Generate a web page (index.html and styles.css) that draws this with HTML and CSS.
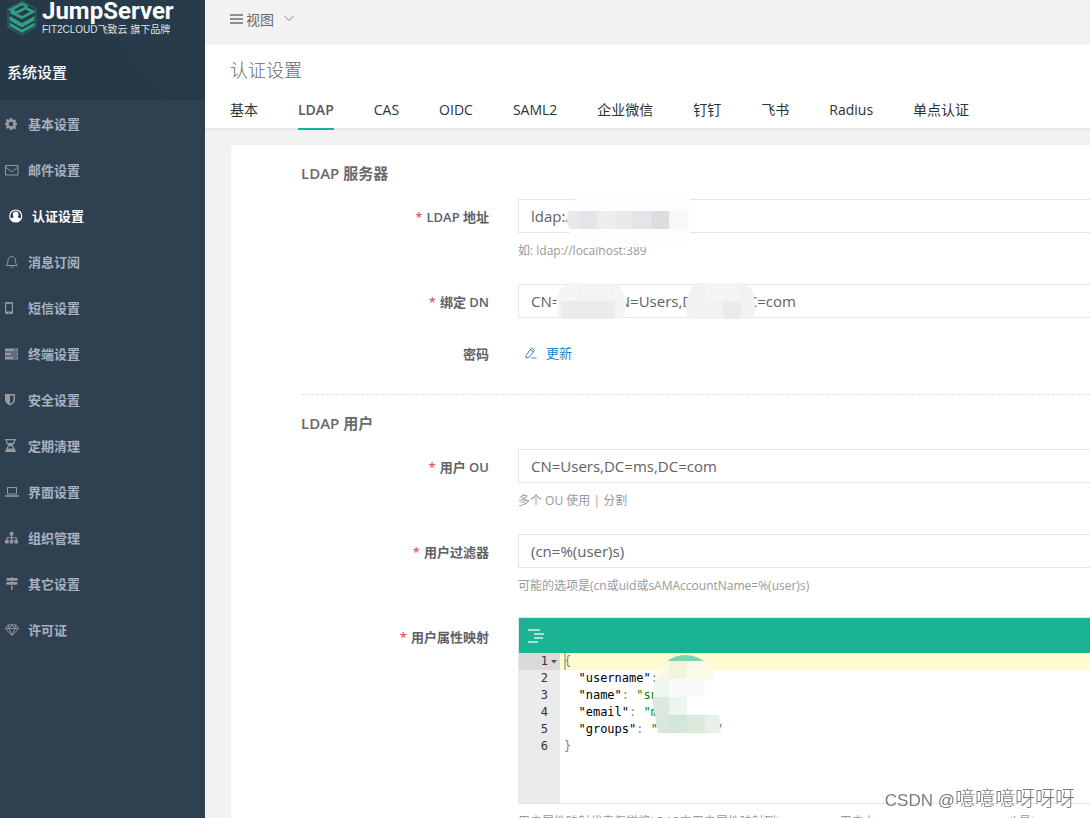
FILE: index.html
```html
<!DOCTYPE html>
<html lang="zh-CN">
<head>
<meta charset="utf-8">
<title>认证设置 - JumpServer</title>
<link rel="stylesheet" href="styles.css">
</head>
<body>
<div class="app">
  <aside class="sidebar">
    <div class="brand">
      <div class="logo">
        <svg class="logo-mark" viewBox="0 0 30 36" aria-hidden="true">
          <path d="M15 1 29 9v18L15 35 1 27V9z" fill="none" stroke="#2a6f6b" stroke-width="1"/>
          <path d="M20.500 6.500 15 3.800 4 9.800 9 12.800 18.500 8 26 11.500 15 17.600 3.500 12" fill="none" stroke="#2f9e83" stroke-width="2.800"/>
          <path d="M2.500 16 15 23 27.500 16V20.500L15 27.500 2.500 20.500zM2.500 22.500 15 29.500 27.500 22.500V26L15 33 2.500 26z" fill="#2f9e83"/>
        </svg>
        <div class="logo-text">
          <span class="logo-name">JumpServer</span>
          <span class="logo-sub">FIT2CLOUD飞致云 旗下品牌</span>
        </div>
      </div>
      <h2 class="section-name">系统设置</h2>
    </div>
    <nav class="menu">
      <a class="menu-item" href="#basic"><svg class="menu-icon" viewBox="0 0 14 14"><path fill-rule="evenodd" d="M5 1h2l.4 1.600 1 .4L9.800 2.200l1.400 1.400-.8 1.400.4 1 1.200.3v1.900l-1.200.4-.4 1 .8 1.400-1.400 1.300-1.400-.8-1 .4L7 13H5l-.4-1.500-1-.4-1.400.8L.8 10.500 1.600 9l-.4-1L0 7.700V5.900l1.200-.3.4-1L.8 3.200 2.200 2l1.400.8 1-.4zM6 4.800a2.200 2.200 0 1 0 0 4.400 2.200 2.200 0 0 0 0-4.400z"/></svg>基本设置</a>
      <a class="menu-item" href="#mail"><svg class="menu-icon line" viewBox="0 0 14 14"><path d="M.5 2.500h12.500v9.500H.5zM.5 4l6.200 4.800L13 4"/></svg>邮件设置</a>
      <a class="menu-item active" href="#auth" aria-current="page"><svg class="menu-icon" viewBox="0 0 14 14"><circle cx="6.700" cy="7" r="6" fill="none" stroke="currentColor" stroke-width="1.200"/><path d="M6.700 2.600c1.800 0 2.800 1.200 2.800 2.900 0 1-.4 1.900-1 2.400.2.500 2.400.6 3.200 2.100a6 6 0 0 1-5 3 6 6 0 0 1-5-3c.8-1.500 3-1.600 3.200-2.100-.6-.5-1-1.400-1-2.400 0-1.700 1-2.900 2.800-2.900z"/></svg>认证设置</a>
      <a class="menu-item" href="#message"><svg class="menu-icon line" viewBox="0 0 14 14"><path d="M6.700.5v1M1.200 10.500C2.600 9 3 7.500 3 5.200 3 3 4.600 1.700 6.700 1.700s3.700 1.300 3.700 3.500c0 2.300.4 3.800 1.800 5.300zM5.300 11.500c.3 1.400 2.500 1.400 2.800 0"/></svg>消息订阅</a>
      <a class="menu-item" href="#sms"><svg class="menu-icon" viewBox="0 0 14 14"><path fill-rule="evenodd" d="M1.300 1h5.400c.8 0 1.300.5 1.300 1.200v9.600c0 .7-.5 1.200-1.300 1.200H1.300C.5 13 0 12.500 0 11.800V2.200C0 1.500.5 1 1.300 1zM1.200 2.800v7.700h5.600V2.800zM4 11.200a.6.6 0 1 0 0 1.200.6.6 0 0 0 0-1.200z"/></svg>短信设置</a>
      <a class="menu-item" href="#terminal"><svg class="menu-icon" viewBox="0 0 14 14"><path fill-rule="evenodd" d="M0 1.500h13v3H0zM9 2.500v1h3v-1zM0 5.500h13v3H0zM6 6.500v1h6v-1zM0 9.500h13v3H0zM8 10.500v1h4v-1z"/></svg>终端设置</a>
      <a class="menu-item" href="#security"><svg class="menu-icon" viewBox="0 0 14 14"><path fill-rule="evenodd" d="M0 1h10v6c0 2.600-2.500 4.200-5 5.500C2.500 11.200 0 9.600 0 7zM5 2.500v8.400c1.700-1 3.500-2.200 3.500-3.900V2.500z"/></svg>安全设置</a>
      <a class="menu-item" href="#clean"><svg class="menu-icon" viewBox="0 0 14 14"><path fill-rule="evenodd" d="M0 0h11v1.300h-.8c0 2.700-1.300 4.300-3 5.200 1.700.9 3 2.500 3 5.200h.8V13H0v-1.300h.8c0-2.700 1.300-4.300 3-5.200-1.700-.9-3-2.500-3-5.200H0zM2 1.300c0 1.200.3 2 .8 2.700h5.400C8.700 3.300 9 2.500 9 1.300zM4.700 7.200C3.600 7.800 2.700 8.500 2.300 9.600h6.400C8.300 8.500 7.400 7.800 6.300 7.200z"/></svg>定期清理</a>
      <a class="menu-item" href="#ui"><svg class="menu-icon" viewBox="0 0 14 14"><path fill-rule="evenodd" d="M2 2h10v7.500H2zM3 3v5.500h8V3zM0 10.300h14v.9c0 .4-.5.600-1 .6H1c-.5 0-1-.2-1-.6z"/></svg>界面设置</a>
      <a class="menu-item" href="#org"><svg class="menu-icon" viewBox="0 0 14 14"><path d="M4.800 1h3.600v3.500H7.200v1.700h4.600V9H13v3.500H9.500V9h1.200V7.200H7.200V9h1.200v3.500H4.800V9H6V7.200H2.500V9h1.200v3.500H0V9h1.400V6.200H6V4.500H4.800z"/></svg>组织管理</a>
      <a class="menu-item" href="#other"><svg class="menu-icon" viewBox="0 0 14 14"><path d="M6 0h1.500v1h4.300L13 2.400l-1.200 1.400H1.500V1H6zM6 4.200h1.500V5h4.800v2.800H2L.6 6.400 2 5h4zM6 8.400h1.500V13H6z"/></svg>其它设置</a>
      <a class="menu-item" href="#license"><svg class="menu-icon line" viewBox="0 0 15 14"><path d="M3.500 1.500h8l3 4-7 7.500-7-7.500zM.5 5.500h14M3.500 1.500l1 4 3 7 3-7 1-4M7.500 1.500l-3 4M7.500 1.500l3 4"/></svg>许可证</a>
    </nav>
  </aside>

  <main class="main">
    <header class="topbar">
      <button class="view-switch" type="button">
        <svg class="bars" viewBox="0 0 13 12" aria-hidden="true"><path d="M0 0h13v2H0zM0 4h13v2H0zM0 8h13v2H0z" fill="#8d9093"/></svg>
        <span>视图</span>
        <svg class="caret" viewBox="0 0 12 8" aria-hidden="true"><path d="M1.500 0 6 4.500 10.500 0" fill="none" stroke="#8f8377" stroke-width="1"/></svg>
      </button>
    </header>

    <div class="page-head">
      <h1 class="page-title">认证设置</h1>
      <nav class="tabs">
        <a class="tab" href="#t1">基本</a>
        <a class="tab selected" href="#t2">LDAP</a>
        <a class="tab" href="#t3">CAS</a>
        <a class="tab" href="#t4">OIDC</a>
        <a class="tab" href="#t5">SAML2</a>
        <a class="tab" href="#t6">企业微信</a>
        <a class="tab" href="#t7">钉钉</a>
        <a class="tab" href="#t8">飞书</a>
        <a class="tab" href="#t9">Radius</a>
        <a class="tab" href="#t10">单点认证</a>
      </nav>
    </div>

    <form class="card">
      <h3 class="group-title">LDAP 服务器</h3>

      <div class="row">
        <label class="label required" for="ldap-url">LDAP 地址</label>
        <div class="field">
          <input class="input" id="ldap-url" type="text" value="ldap:/">
          <p class="help">如: ldap://localhost:389</p>
          <svg class="mosaic mosaic-url" viewBox="0 0 130 54" aria-hidden="true">
            <path d="M16 0h97q12 4 17 18h-5v18l-3 5q-6 13-22 13H22Q8 50 4 41L0 36V18Q5 6 16 0z" fill="#fdfdfd"/>
            <path d="M1 18h11v18H3L0 30z" fill="#e9e9ea"/>
            <path d="M12 18h18v18H12z" fill="#e4e5e8"/>
            <path d="M30 18h18v18H30z" fill="#eeeeef"/>
            <path d="M48 18h18v18H48z" fill="#ebe9e8"/>
            <path d="M66 18h18v18H66z" fill="#e4e5e8"/>
            <path d="M84 18h18v18H84z" fill="#dddddf"/>
            <path d="M102 18h18v18h-18z" fill="#f8f8f8"/>
          </svg>
        </div>
      </div>

      <div class="row after-dn">
        <label class="label required" for="bind-dn">绑定 DN</label>
        <div class="field">
          <input class="input" id="bind-dn" type="text" value="CN=&nbsp;&nbsp;&nbsp;&nbsp;&nbsp;&nbsp;&nbsp;&nbsp;&nbsp;&nbsp;&nbsp;&nbsp;&nbsp;&nbsp;&nbsp;N=Users,D&nbsp;&nbsp;&nbsp;&nbsp;&nbsp;&nbsp;&nbsp;&nbsp;&nbsp;&nbsp;&nbsp;&nbsp;&nbsp;&nbsp;C=com">
          <svg class="mosaic mosaic-dn" viewBox="0 0 200 36" aria-hidden="true">
            <path d="M10 0h50q10 8 10 20 0 8-3 16H3Q0 28 0 20 2 8 10 0z" fill="#f4f5f5"/>
            <path d="M5 18h54v18H5z" fill="#eaebeb"/>
            <path d="M23 0h36v18H23z" fill="#f2f3f4"/>
            <path d="M140 0h50q9 8 9 22 0 8-3 14h-63q-4-8-3-16 2-12 10-20z" fill="#f1f1f1"/>
            <path d="M167 18h18v18h-18z" fill="#ebebec"/>
            <path d="M149 0h36v18h-36z" fill="#f4f4f5"/>
          </svg>
        </div>
      </div>

      <div class="row password-row">
        <span class="label" id="pwd-label">密码</span>
        <div class="field">
          <button class="link-button" type="button" aria-describedby="pwd-label">
            <svg class="pen" viewBox="0 0 12 12" aria-hidden="true"><path d="M1 8.500 6.500 1 9.500 3.200 4 10.500 1 11zM5.300 2.700l3 2.200M6 11h5.500" fill="none" stroke="#4a86c8" stroke-width="1"/></svg>
            更新
          </button>
        </div>
      </div>

      <hr class="divider">
      <h3 class="group-title">LDAP 用户</h3>

      <div class="row">
        <label class="label required" for="user-ou">用户 OU</label>
        <div class="field">
          <input class="input" id="user-ou" type="text" value="CN=Users,DC=ms,DC=com">
          <p class="help">多个 OU 使用 | 分割</p>
        </div>
      </div>

      <div class="row before-editor">
        <label class="label required" for="user-filter">用户过滤器</label>
        <div class="field">
          <input class="input" id="user-filter" type="text" value="(cn=%(user)s)">
          <p class="help">可能的选项是(cn或uid或sAMAccountName=%(user)s)</p>
        </div>
      </div>

      <div class="row editor-row">
        <span class="label required">用户属性映射</span>
        <div class="field">
          <div class="editor">
            <div class="editor-bar">
              <button class="format" type="button" aria-label="格式化">
                <svg viewBox="0 0 16 14" aria-hidden="true"><path d="M0 0h12v2H0zM6 4h10v2H6zM6 8h9v2H6zM0 12h10v2H0z" fill="#a9e0d1"/></svg>
              </button>
            </div>
            <div class="code">
              <div class="code-line current"><span class="num">1</span><span class="fold"><svg viewBox="0 0 12 17" aria-hidden="true"><path d="M3 7h6L6 10.500z" fill="#555"/></svg></span><code class="src caret-at">{</code></div>
              <div class="code-line"><span class="num">2</span><span class="fold"></span><code class="src">  <b>"username"</b>:</code></div>
              <div class="code-line"><span class="num">3</span><span class="fold"></span><code class="src">  <b>"name"</b>: <i>"sn</i></code></div>
              <div class="code-line"><span class="num">4</span><span class="fold"></span><code class="src">  <b>"email"</b>: <i>"m</i></code></div>
              <div class="code-line"><span class="num">5</span><span class="fold"></span><code class="src">  <b>"groups"</b>: <i>"        "</i></code></div>
              <div class="code-line"><span class="num">6</span><span class="fold"></span><code class="src">}</code></div>
              <svg class="mosaic mosaic-code" viewBox="0 0 70 80" aria-hidden="true">
                <path d="M15 7Q23 1 33 1t19 6z" fill="#7fd3b3"/>
                <path d="M15 7h2v18H4Q6 14 15 7z" fill="#faf9e2"/>
                <path d="M17 7h18v18H17z" fill="#f2f5dc"/>
                <path d="M35 7h17q8 7 11 18H35z" fill="#fbfae6"/>
                <path d="M4 25h13v18H1q0-10 3-18z" fill="#f0f6f0"/>
                <path d="M17 25h36v18H17z" fill="#fafafa"/>
                <path d="M53 25h10v36H53zM35 43h18v18H35z" fill="#fff"/>
                <path d="M1 43h16v18H3Q0 52 1 43z" fill="#dbe9df"/>
                <path d="M17 43h18v18H17z" fill="#edf5f1"/>
                <path d="M3 61h14v18H6z" fill="#d9e8da"/>
                <path d="M17 61h18v18H17z" fill="#d4e6d9"/>
                <path d="M35 61h18v18H35z" fill="#dceadd"/>
                <path d="M53 61h14l2 18H53z" fill="#e8f1e9"/>
              </svg>
            </div>
          </div>
          <p class="help nowrap">用户属性映射代表怎样将LDAP中用户属性映射到jumpserver用户上，username, name,email 是jumpserver的属性</p>
        </div>
      </div>
    </form>
  </main>
</div>
<div class="watermark"><span>CSDN @</span>噫噫噫呀呀呀</div>
</body>
</html>
```

FILE: styles.css
```css
* {
  box-sizing: border-box;
}

body {
  margin: 0;
  height: 100vh;
  overflow: hidden;
  background: #f2f2f2;
  color: #676a6c;
  font: 13px/20px "Open Sans", "Noto Sans CJK SC", sans-serif;
}

h1, h2, h3, p {
  margin: 0;
}

a {
  text-decoration: none;
}

button {
  border: 0;
  padding: 0;
  background: none;
  color: inherit;
  font: inherit;
  cursor: pointer;
}

.app {
  display: flex;
  height: 100%;
}

/* Sidebar */

.sidebar {
  flex: 0 0 205px;
  background: #2f4050;
}

.brand {
  display: flex;
  flex-direction: column;
  justify-content: space-between;
  height: 100px;
  padding: 0 7px 18px;
  background: linear-gradient(50deg, #263949 58%, #273b4b 58%);
}

.logo {
  display: flex;
  gap: 5px;
}

.logo-mark {
  width: 30px;
  height: 36px;
}

.logo-text {
  display: flex;
  flex-direction: column;
  color: #fff;
  white-space: nowrap;
}

.logo-name {
  font: 700 24px/22px Roboto, sans-serif;
}

.logo-sub {
  color: #dfe3e6;
  font: 10px/16px "Liberation Sans", "Noto Sans CJK SC", sans-serif;
}

.section-name {
  color: #fff;
  font-size: 15px;
  font-weight: 500;
  line-height: 20px;
}

.menu {
  padding-top: 1px;
}

.menu-item {
  display: flex;
  align-items: center;
  gap: 9px;
  height: 46px;
  padding-left: 5px;
  color: #a7b1c2;
  font-weight: 600;
}

.menu-icon {
  width: 14px;
  height: 14px;
  fill: #96999e;
}

.menu-icon.line {
  fill: none;
  stroke: #96999e;
}

.menu-item.active {
  padding-left: 9px;
  color: #fff;
}

.active .menu-icon {
  fill: #fff;
}

/* Main column */

.main {
  flex: 1;
  min-width: 0;
}

.topbar {
  display: flex;
  align-items: center;
  height: 45px;
  padding: 0 25px 6px;
}

.view-switch {
  display: flex;
  align-items: center;
  font-size: 14px;
}

.bars {
  width: 13px;
  height: 12px;
  margin-right: 3px;
}

.caret {
  width: 12px;
  height: 8px;
  margin-left: 9px;
}

.page-head {
  padding: 13px 0 0;
  background: #fff;
}

.page-title {
  padding: 0 25px;
  font-size: 18px;
  font-weight: 300;
  line-height: 24px;
}

.tabs {
  display: flex;
  gap: 40px;
  height: 48px;
  padding: 0 25px;
  border-bottom: 2px solid #e4e7ed;
}

.tab {
  height: 48px;
  padding-top: 18px;
  color: #303133;
  font-size: 14px;
  white-space: nowrap;
}

.tab.selected {
  border-bottom: 2px solid #1ab394;
  color: #555a5e;
  font-weight: 600;
}

/* Form card */

.card {
  margin: 14px 0 0 25px;
  padding: 18px 0 0 70px;
  border: 1px solid #ebeef5;
  border-right: 0;
  border-radius: 4px 0 0 0;
  background: #fff;
}

.group-title {
  margin-bottom: 16px;
  font-size: 15px;
  font-weight: 600;
  line-height: 20px;
}

.row {
  display: flex;
  margin-bottom: 25px;
}

.row.after-dn {
  margin-bottom: 18px;
}

.row.password-row {
  margin-bottom: 0;
}

.row.before-editor {
  margin-bottom: 23px;
}

.label {
  flex: 0 0 217px;
  padding-right: 29px;
  color: #606266;
  font-weight: 600;
  line-height: 36px;
  height: 34px;
  text-align: right;
}

.editor-row .label {
  line-height: 40px;
}

.required::before {
  content: "*";
  margin-right: 4px;
  color: #ed5565;
}

.field {
  position: relative;
  flex: 1;
  min-width: 0;
}

.input {
  display: block;
  width: 100%;
  height: 34px;
  padding: 0 12px;
  border: 1px solid #e5e6e7;
  border-right: 0;
  border-radius: 0;
  background: #fff;
  color: #606266;
  font: 15px "Open Sans", "Noto Sans CJK SC", sans-serif;
}

.help {
  margin-top: 9px;
  color: #999;
  font-size: 12px;
  line-height: 17px;
}

.nowrap {
  white-space: nowrap;
}

.link-button {
  display: flex;
  align-items: center;
  gap: 9px;
  height: 34px;
  padding-left: 7px;
  color: #1c84c6;
}

.pen {
  width: 12px;
  height: 12px;
}

.divider {
  margin: 24px 0 18px;
  border: 0;
  border-top: 1px dashed #e0e2e4;
}

/* Code editor */

.editor {
  border: 1px solid #e5e6e7;
  border-right: 0;
}

.editor-bar {
  display: flex;
  align-items: center;
  height: 35px;
  padding-left: 9px;
  background: #1ab394;
}

.format {
  width: 16px;
  height: 14px;
}

.format svg {
  display: block;
}

.code {
  position: relative;
  height: 150px;
  background: linear-gradient(to right, #ebebeb 41px, #fff 41px);
}

.code-line {
  display: flex;
  height: 17px;
  color: #808080;
  font: 12px/17px "DejaVu Sans Mono", monospace;
}

.num {
  width: 29px;
  color: #333;
  text-align: right;
}

.fold {
  width: 12px;
}

.fold svg {
  display: block;
  width: 12px;
  height: 17px;
}

.src {
  flex: 1;
  padding-left: 4px;
  font: inherit;
  white-space: pre;
}

.src b {
  color: #000;
  font-weight: 400;
}

.src i {
  color: #008000;
  font-style: normal;
}

.current {
  background: linear-gradient(to right, #dadada 41px, #fffbd1 41px);
}

.caret-at {
  background: linear-gradient(#bdb99a, #bdb99a) 4px 0 / 2px 17px no-repeat;
}

/* Pixelated patches over private values */

.mosaic {
  position: absolute;
  pointer-events: none;
}

.mosaic-url {
  left: 49px;
  top: -6px;
  width: 130px;
  height: 54px;
}

.mosaic-dn {
  left: 38px;
  top: -1px;
  width: 200px;
  height: 36px;
}

.mosaic-code {
  left: 133px;
  top: 1px;
  width: 70px;
  height: 80px;
}

.watermark {
  position: fixed;
  right: 15px;
  bottom: 4px;
  color: #7c7c7c;
  font: 300 20px/26px "Noto Sans CJK SC", sans-serif;
  text-shadow: 1px 1px 0 #fff;
}

.watermark span {
  font: 17px/26px "Liberation Sans", sans-serif;
}
```
